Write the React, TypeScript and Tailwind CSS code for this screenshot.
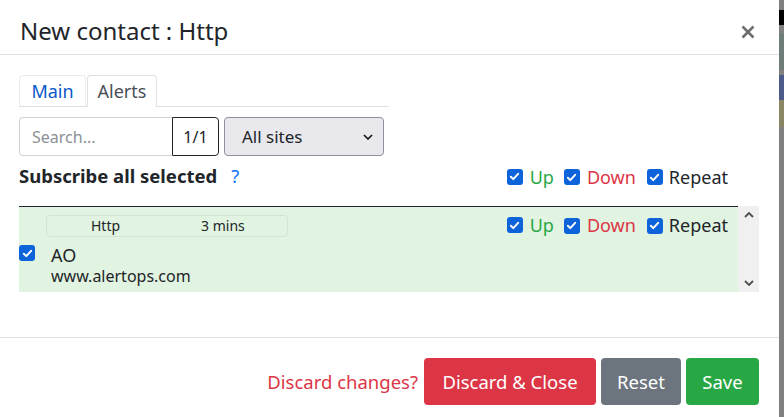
import React from "react";

function Check() {
  return (
    <span className="inline-flex h-4 w-4 shrink-0 items-center justify-center rounded-[3px] bg-[#0d63d9]">
      <svg viewBox="0 0 16 16" className="h-[13px] w-[13px]">
        <path d="M3.5 8.3l3 3 6-6.6" stroke="white" strokeWidth="2.4" fill="none" strokeLinecap="round" strokeLinejoin="round" />
      </svg>
    </span>
  );
}

function AlertFlags() {
  return (
    <div className="flex items-center text-[18px] leading-none">
      <Check />
      <span className="ml-[7px] text-[#28a745]">Up</span>
      <span className="ml-[10px]"><Check /></span>
      <span className="ml-[7px] text-[#dc3545]">Down</span>
      <span className="ml-[11px]"><Check /></span>
      <span className="ml-[6px] text-[#212529]">Repeat</span>
    </div>
  );
}

function Chevron({ up }: { up?: boolean }) {
  return (
    <svg viewBox="0 0 10 6" className="h-[6px] w-[10px]">
      <path
        d={up ? "M1 5l4-4 4 4" : "M1 1l4 4 4-4"}
        stroke="#505050"
        strokeWidth="1.8"
        fill="none"
      />
    </svg>
  );
}

export default function App() {
  return (
    <div
      className="flex h-[417px] w-[784px] overflow-hidden bg-white text-[#212529]"
      style={{ fontFamily: '"Noto Sans", "Open Sans", sans-serif' }}
    >
      <div className="flex w-[779px] flex-col bg-white">
        {/* header */}
        <div className="flex h-[55px] items-center justify-between border-b border-[#dee2e6] pl-5 pr-6">
          <h1 className="pt-[8px] text-[24px] leading-none">New contact : Http</h1>
          <svg viewBox="0 0 14 14" className="mt-[9px] h-[14px] w-[14px]">
            <path d="M1.5 1.5l11 11M12.5 1.5l-11 11" stroke="#6f6f6f" strokeWidth="2.6" />
          </svg>
        </div>

        {/* body */}
        <div className="flex-1 pl-[19px] pr-5 pt-5">
          <div className="flex h-[32px] w-[370px] items-end border-b border-[#dee2e6] text-[18px]">
            <div className="flex h-[31px] w-[67px] items-center justify-center rounded-t-[4px] border border-b-0 border-[#e9ecef] text-[#0a58ca]">
              Main
            </div>
            <div className="-mb-px ml-px flex h-[32px] w-[70px] items-center justify-center rounded-t-[4px] border border-b-0 border-[#dee2e6] bg-white text-[#495057]">
              Alerts
            </div>
          </div>

          <div className="mt-[10px] flex h-[39px] items-stretch">
            <div className="flex w-[153px] items-center rounded-l-[4px] border border-r-0 border-[#ced4da] px-3 text-[16px] text-[#8a8f94]">
              Search...
            </div>
            <div className="flex w-[47px] items-center justify-center rounded-r-[4px] border border-[#212529] text-[16px]">
              1/1
            </div>
            <div className="ml-[5px] flex w-[160px] items-center justify-between rounded-[4px] border border-[#8f8f9d] bg-[#e9e9ed] pl-[17px] pr-[10px] text-[17px]">
              <span>All sites</span>
              <svg viewBox="0 0 10 6" className="h-[6px] w-[10px]">
                <path d="M1 1l4 4 4-4" stroke="#111" strokeWidth="1.6" fill="none" />
              </svg>
            </div>
          </div>

          <div className="mt-[8px] flex h-[25px] items-center justify-between pr-[31px]">
            <div className="flex items-center text-[18.5px] leading-none">
              <span className="font-bold">Subscribe all selected</span>
              <span className="ml-[14px] text-[#0d6efd]">?</span>
            </div>
            <AlertFlags />
          </div>

          <div className="mt-[17px] flex h-[86px]">
            <div className="flex-1 border-t border-[#212529] bg-[#e1f3e1] pr-[10px] pt-[8px]">
              <div className="flex items-start justify-between">
                <div className="ml-[27px] flex h-[22px] w-[242px] items-center rounded-[4px] border border-[#d4e3d4] text-[14px] leading-none">
                  <span className="ml-[44px]">Http</span>
                  <span className="ml-[81px]">3 mins</span>
                </div>
                <div className="mt-px">
                  <AlertFlags />
                </div>
              </div>
              <div className="mt-[8px] flex">
                <Check />
                <div className="ml-[16px] -mt-[1px]">
                  <div className="text-[18px] leading-[22px]">AO</div>
                  <div className="text-[16px] leading-[20px]">www.alertops.com</div>
                </div>
              </div>
            </div>
            <div className="flex w-[21px] flex-col items-center justify-between bg-[#f0f0f0] py-[6px]">
              <Chevron up />
              <Chevron />
            </div>
          </div>
        </div>

        {/* footer */}
        <div className="flex h-[80px] items-center justify-end border-t border-[#dee2e6] pr-5 pt-[8px] text-[18.5px]">
          <span className="mr-[6px] text-[#dc3545]">Discard changes?</span>
          <button className="h-[47px] w-[172px] rounded-[4px] bg-[#dc3545] text-white">Discard &amp; Close</button>
          <button className="ml-[5px] h-[47px] w-[80px] rounded-[4px] bg-[#6c757d] text-white">Reset</button>
          <button className="ml-[5px] h-[47px] w-[73px] rounded-[4px] bg-[#28a745] text-white">Save</button>
        </div>
      </div>

      {/* backdrop strip */}
      <div className="flex w-[5px] flex-col bg-[#808080]">
        <div className="h-[10px]" />
        <div className="h-[15px] bg-black" />
        <div className="h-[8px]" />
        <div className="h-[37px] bg-[#6e7d79]" />
        <div className="h-[5px]" />
        <div className="h-[25px] bg-[#4b5a88]" />
        <div className="h-[27px] bg-[#8a8563]" />
      </div>
    </div>
  );
}
